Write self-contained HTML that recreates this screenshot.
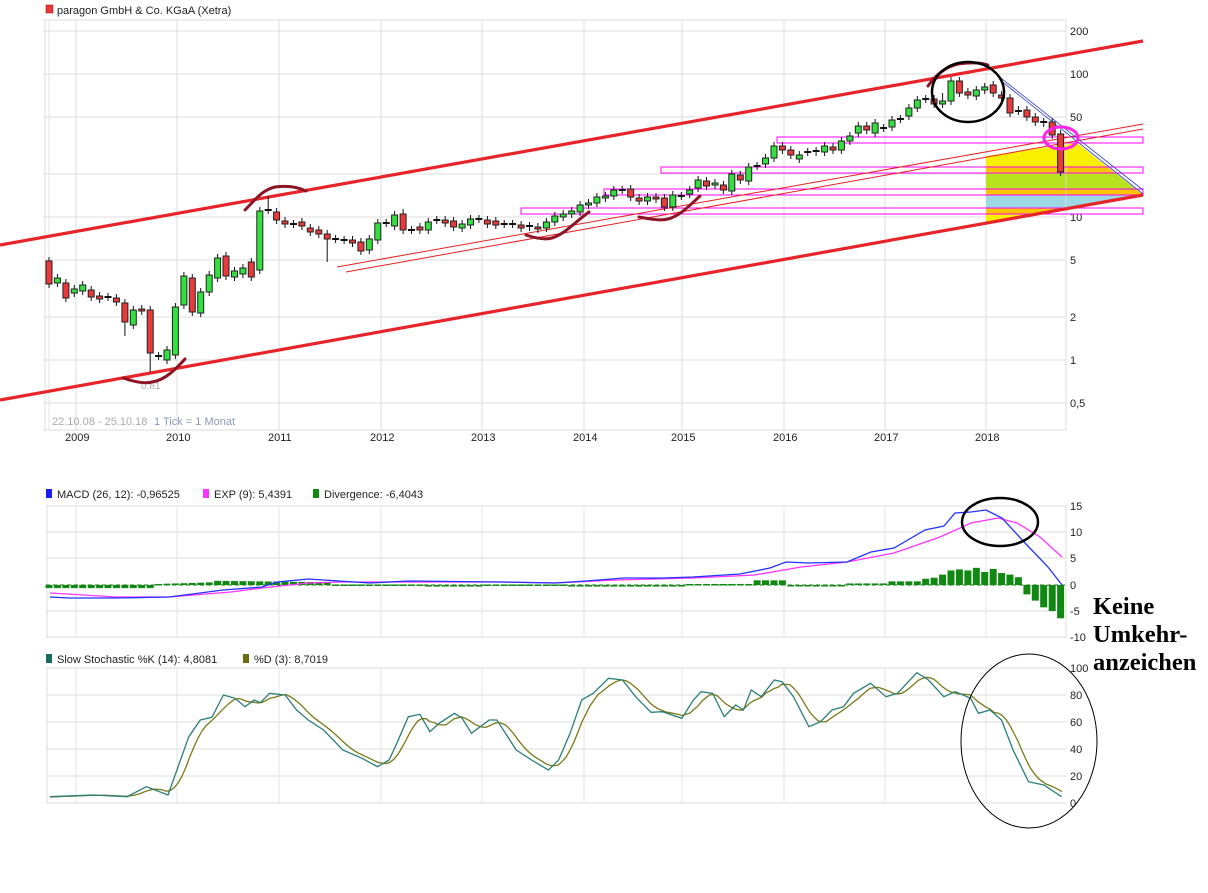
<!DOCTYPE html>
<html><head><meta charset="utf-8">
<style>
html,body{margin:0;padding:0;background:#fff;}
body{width:1208px;height:893px;overflow:hidden;position:relative;font-family:"Liberation Sans",sans-serif;}
svg{position:absolute;left:0;top:0;}
</style></head>
<body>
<svg id="s" width="1208" height="893" xmlns="http://www.w3.org/2000/svg" font-family="Liberation Sans, sans-serif"></svg>
<script>
var S=document.getElementById('s');var h='';
function L(x1,y1,x2,y2,c,w,extra){h+='<line x1="'+x1+'" y1="'+y1+'" x2="'+x2+'" y2="'+y2+'" stroke="'+c+'" stroke-width="'+w+'" '+(extra||'')+'/>';}
function T(x,y,t,c,fs,extra){h+='<text x="'+x+'" y="'+y+'" fill="'+c+'" font-size="'+fs+'" '+(extra||'')+'>'+t+'</text>';}
function R(x,y,w,hh,f,s,sw){h+='<rect x="'+x+'" y="'+y+'" width="'+w+'" height="'+hh+'" fill="'+f+'" stroke="'+(s||'none')+'" stroke-width="'+(sw||0)+'"/>';}
var yrs=[76,177,279,381,482,584,682,784,885,986],yl=['2009','2010','2011','2012','2013','2014','2015','2016','2017','2018'];
var gy=[[31,'200'],[74,'100'],[117,'50'],[174,'20'],[217,'10'],[260,'5'],[317,'2'],[360,'1'],[403,'0,5']];
gy.forEach(function(g){L(43,g[0],1066,g[0],'#dcdcdc',1);T(1070,g[0]+4,g[1],'#222',11);});
yrs.forEach(function(x,i){L(x,20,x,430,'#dcdcdc',1);T(x-11,441,yl[i],'#222',11);});
L(43,20,1066,20,'#dcdcdc',1);L(43,430,1066,430,'#dcdcdc',1);L(45,20,45,430,'#dcdcdc',1);L(49,20,49,430,'#e4e4e4',1);L(1066,20,1066,430,'#dcdcdc',1);
R(46,5,7,8,'#e8383b','#900',0.5);T(57,14,'paragon GmbH &amp; Co. KGaA (Xetra)','#222',11);
h+='<defs><clipPath id="cp"><polygon points="986,156 1077,143 1143,195 986,222"/></clipPath></defs>';
h+='<g clip-path="url(#cp)">';
R(986,130,170,100,'#f9ef00');R(986,167,170,7,'#ffc400');R(986,173,170,16,'#b8e21e');R(986,189,170,6,'#ffc400');R(986,195,170,13,'#9dd9e5');R(986,208,170,6,'#ffc400');
h+='</g>';
L(1066,143,1066,225,'#dcdcdc',1);
[[521,208],[604,189],[661,167],[777,137]].forEach(function(r){h+='<rect x="'+r[0]+'" y="'+r[1]+'" width="'+(1143-r[0])+'" height="6" fill="none" stroke="#ff00ff" stroke-width="1"/>';});
L(337,267,1143,124,'#e82020',1);L(346,272,1143,129,'#e82020',1);
L(997,75,1143,190,'#3040c8',0.8);L(1000,80,1143,194,'#3040c8',0.8);
L(0,245,1143,41,'#e8242b',3.2);L(0,400,1143,195,'#e8242b',3.2);
var C=[[261,284],[283,278],[283,298],[293,289],[291,285],[290,297],[296,299],[297,297],[298,302],[303,322],[325,310],[309,311],[310,353],[356,356],[360,350],[355,307],[305,276],[278,312],[313,292],[292,275],[278,258],[256,276],[277,271],[274,268],[262,277],[270,211],[210,210],[212,220],[221,224],[224,224],[222,226],[228,232],[230,234],[234,239],[239,239],[240,240],[240,243],[242,251],[250,239],[240,223],[223,223],[226,215],[214,230],[230,230],[227,230],[230,222],[220,220],[220,223],[221,227],[228,224],[225,219],[219,219],[220,224],[221,225],[224,224],[224,224],[225,228],[226,227],[227,229],[228,222],[222,216],[217,214],[214,211],[212,205],[205,203],[203,197],[198,196],[196,190],[190,190],[189,197],[198,201],[201,197],[197,199],[198,207],[207,195],[196,196],[194,190],[188,180],[181,186],[185,183],[185,190],[191,174],[175,180],[181,167],[166,166],[164,158],[158,146],[146,150],[150,155],[159,155],[152,152],[151,152],[152,146],[147,150],[150,141],[141,136],[133,126],[126,130],[133,123],[128,128],[127,120],[119,119],[116,108],[108,100],[99,99],[99,104],[104,101],[101,81],[81,93],[92,95],[96,90],[90,87],[85,93],[95,98],[98,113],[111,110],[110,117],[117,122],[122,123],[122,135],[134,172]];
C.forEach(function(c,i){var x=49+i*8.43,o=c[0],cl=c[1],t=Math.min(o,cl),b=Math.max(o,cl);
 var hi=t-4,lo=b+4; if(i==33)lo=262; if(i==12)lo=372; if(i==9)lo=336;if(i==26)hi=196;if(i==42)hi=209;if(i==106)hi=93;
 L(x.toFixed(1),hi,x.toFixed(1),lo,'#111',1);
 if(b-t<2){L((x-3.5).toFixed(1),o,(x+3.5).toFixed(1),o,'#111',2);}
 else R((x-3).toFixed(1),t,6,b-t,cl<o?'#33e040':'#e83a3a','#222',1);});
T(141,389,'0,81','#aaa',10);
T(52,425,'22.10.08 - 25.10.18','#aaa',11);T(154,425,'1 Tick = 1 Monat','#8a9ab8',11);
var dr='fill="none" stroke="#8b1525" stroke-width="3" stroke-linecap="round"';
h+='<path d="M123,378 C135,382 145,384 152,382 C165,380 175,370 185,359" '+dr+'/>';
h+='<path d="M245,210 C255,200 262,190 275,187 C290,185 300,188 306,191" '+dr+'/>';
h+='<path d="M526,235 C535,238 545,240 552,238 C565,234 575,222 589,212" '+dr+'/>';
h+='<path d="M639,217 C650,219 660,221 668,219 C680,216 690,205 700,196" '+dr+'/>';
h+='<path d="M928,86 C935,76 945,67 958,64 C972,62 982,63 988,65" '+dr+'/>';
h+='<ellipse cx="968" cy="92" rx="36" ry="30" fill="none" stroke="#000" stroke-width="2.5"/>';
h+='<ellipse cx="1061" cy="138" rx="17" ry="11" fill="none" stroke="#ff22ee" stroke-width="3"/>';
var mg=[[506,'15'],[532,'10'],[558,'5'],[585,'0'],[611,'-5'],[637,'-10']];
mg.forEach(function(g){L(46,g[0],1066,g[0],'#dcdcdc',1);T(1070,g[0]+4,g[1],'#222',11);});
yrs.forEach(function(x){L(x,506,x,638,'#e4e4e4',1);});L(47,506,47,638,'#dcdcdc',1);L(1066,506,1066,638,'#dcdcdc',1);
R(46,489,6,9,'#1a1aff');T(57,498,'MACD (26, 12): -0,96525','#222',11);
R(203,489,6,9,'#ff33ff');T(214,498,'EXP (9): 5,4391','#222',11);
R(313,489,6,9,'#118811');T(324,498,'Divergence: -6,4043','#222',11);
L(46,585,1066,585,'#117711',1,'stroke-dasharray="4,3"');
var D=[];for(var i=0;i<121;i++){var v;
 if(i<13)v=-0.6;else if(i<20)v=0.2+0.05*(i-13);else if(i<34)v=0.8-0.02*(i-20);else if(i<45)v=0.1;else if(i<52)v=-0.3;else if(i<62)v=0.1;else if(i<76)v=-0.3;else if(i<84)v=0.2;else if(i<88)v=0.9;else if(i<95)v=-0.15;else if(i<100)v=0.3;else if(i<104)v=0.7;
 else v=[1.2,1.4,2,2.8,3.0,2.8,3.3,2.5,3.1,2.3,2.0,1.5,-1.8,-3.0,-4.3,-5.0,-6.4][i-104];
 D.push(v);}
D.forEach(function(v,i){var x=49+i*8.43,y=585-v*5.2;R((x-3.5).toFixed(1),Math.min(y,585),7,Math.max(Math.abs(585-y),1.5),'#118811');});
function PL(pts,c,w){h+='<polyline points="'+pts.map(function(p){return p[0]+','+p[1]}).join(' ')+'" fill="none" stroke="'+c+'" stroke-width="'+w+'"/>';}
PL([[50,593],[116,597],[169,597],[231,592],[262,588],[308,583],[339,582],[385,582],[501,582],[555,583],[616,580],[693,578],[755,575],[801,567],[847,562],[894,553],[940,537],[971,523],[998,518],[1017,523],[1040,537],[1062,557]],'#ff33ff',1.3);
PL([[50,597],[69,598],[116,598],[169,597],[200,593],[223,590],[262,587],[277,582],[308,579],[339,581],[370,583],[408,581],[501,582],[555,583],[586,581],[624,578],[663,578],[693,577],[740,574],[770,568],[786,562],[809,563],[847,562],[871,552],[894,548],[925,530],[944,526],[955,513],[971,512],[986,510],[1002,518],[1025,543],[1048,567],[1062,585]],'#2233ff',1.3);
h+='<ellipse cx="1000" cy="522" rx="38" ry="24" fill="none" stroke="#000" stroke-width="2.5"/>';
var sg=[[668,'100'],[695,'80'],[722,'60'],[749,'40'],[776,'20'],[803,'0']];
sg.forEach(function(g){L(46,g[0],1066,g[0],'#dcdcdc',1);T(1070,g[0]+4,g[1],'#222',11);});
yrs.forEach(function(x){L(x,668,x,803,'#e4e4e4',1);});L(47,668,47,803,'#dcdcdc',1);
R(46,654,6,9,'#1a6a60');T(57,663,'Slow Stochastic %K (14): 4,8081','#222',11);
R(243,654,6,9,'#6b6b10');T(254,663,'%D (3): 8,7019','#222',11);
var K=[[65,950],[120,945],[165,950],[190,920],[218,945],[245,770],[260,720],[275,712],[290,645],[305,655],[318,680],[330,660],[338,668],[350,640],[370,645],[385,690],[400,720],[420,750],[445,810],[470,835],[490,860],[505,840],[515,790],[530,710],[545,703],[558,755],[570,730],[590,700],[600,715],[612,760],[635,720],[645,720],[670,810],[690,840],[712,870],[725,840],[740,760],[755,660],[770,640],[790,595],[808,600],[825,650],[845,697],[860,695],[885,715],[900,660],[910,635],[925,640],[940,710],[955,675],[965,690],[975,630],[988,650],[1005,600],[1015,605],[1030,650],[1050,740],[1065,725],[1080,690],[1095,680],[1108,640],[1130,610],[1150,650],[1165,640],[1190,578],[1205,600],[1225,650],[1240,635],[1260,655],[1270,700],[1285,690],[1300,720],[1315,810],[1335,905],[1355,915],[1378,950]].map(function(p){return [+(p[0]/1.298).toFixed(1),+(480+p[1]/3).toFixed(1)];});
function kat(x){for(var j=1;j<K.length;j++){if(K[j][0]>=x){var a=K[j-1],b=K[j],t=(x-a[0])/(b[0]-a[0]);return a[1]+t*(b[1]-a[1]);}}return K[K.length-1][1];}
var Dp=[];for(var x=50;x<=1062;x+=4){var v=(kat(x)+kat(x-8)+kat(x-16))/3;Dp.push([x,v.toFixed(1)]);}
PL(Dp,'#7a7a18',1.3);PL(K,'#2a7f78',1.3);
h+='<ellipse cx="1029" cy="741" rx="68" ry="87" fill="none" stroke="#000" stroke-width="1"/>';
h+='<text font-family="Liberation Serif, serif" font-weight="bold" font-size="24.5" fill="#000"><tspan x="1093" y="614">Keine</tspan><tspan x="1093" y="642">Umkehr-</tspan><tspan x="1093" y="670">anzeichen</tspan></text>';
S.innerHTML=h;
</script>
</body></html>
